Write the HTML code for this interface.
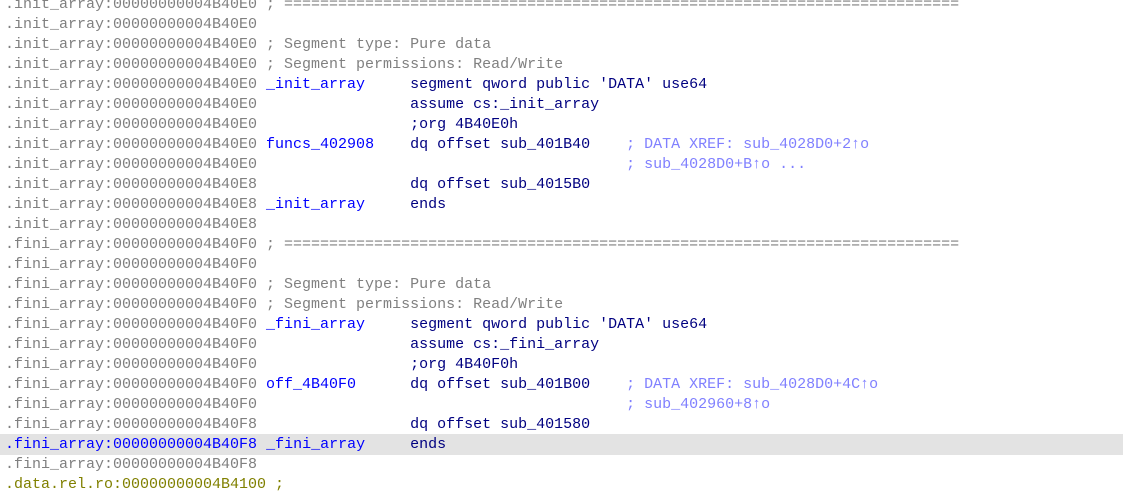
<!DOCTYPE html>
<html><head><style>
body{margin:0;background:#fff;width:1123px;height:483px;overflow:hidden;position:relative}
#c{position:absolute;left:5px;top:-5px;font:15px/20px "Liberation Mono",monospace;color:#808080}
.l{height:20px;white-space:pre}
.h{background:#e3e3e3;margin-left:-5px;padding-left:5px;width:1118px;position:relative;top:-1px;padding-top:1px;margin-bottom:-1px}
.n{color:#0000ff}.i{color:#000080}.c{color:#8080ff}.h .a{color:#0000ff}.o{color:#808000}
</style></head><body><div id="c"><div class="l">.init_array:00000000004B40E0 ; ===========================================================================</div><div class="l">.init_array:00000000004B40E0</div><div class="l">.init_array:00000000004B40E0 ; Segment type: Pure data</div><div class="l">.init_array:00000000004B40E0 ; Segment permissions: Read/Write</div><div class="l">.init_array:00000000004B40E0 <span class="n">_init_array</span>     <span class="i">segment qword public 'DATA' use64</span></div><div class="l">.init_array:00000000004B40E0                 <span class="i">assume cs:_init_array</span></div><div class="l">.init_array:00000000004B40E0                 <span class="i">;org 4B40E0h</span></div><div class="l">.init_array:00000000004B40E0 <span class="n">funcs_402908</span>    <span class="i">dq offset sub_401B40</span>    <span class="c">; DATA XREF: sub_4028D0+2↑o</span></div><div class="l">.init_array:00000000004B40E0                                         <span class="c">; sub_4028D0+B↑o ...</span></div><div class="l">.init_array:00000000004B40E8                 <span class="i">dq offset sub_4015B0</span></div><div class="l">.init_array:00000000004B40E8 <span class="n">_init_array</span>     <span class="i">ends</span></div><div class="l">.init_array:00000000004B40E8</div><div class="l">.fini_array:00000000004B40F0 ; ===========================================================================</div><div class="l">.fini_array:00000000004B40F0</div><div class="l">.fini_array:00000000004B40F0 ; Segment type: Pure data</div><div class="l">.fini_array:00000000004B40F0 ; Segment permissions: Read/Write</div><div class="l">.fini_array:00000000004B40F0 <span class="n">_fini_array</span>     <span class="i">segment qword public 'DATA' use64</span></div><div class="l">.fini_array:00000000004B40F0                 <span class="i">assume cs:_fini_array</span></div><div class="l">.fini_array:00000000004B40F0                 <span class="i">;org 4B40F0h</span></div><div class="l">.fini_array:00000000004B40F0 <span class="n">off_4B40F0</span>      <span class="i">dq offset sub_401B00</span>    <span class="c">; DATA XREF: sub_4028D0+4C↑o</span></div><div class="l">.fini_array:00000000004B40F0                                         <span class="c">; sub_402960+8↑o</span></div><div class="l">.fini_array:00000000004B40F8                 <span class="i">dq offset sub_401580</span></div><div class="l h"><span class="a">.fini_array:00000000004B40F8</span> <span class="n">_fini_array</span>     <span class="i">ends</span></div><div class="l">.fini_array:00000000004B40F8</div><div class="l o">.data.rel.ro:00000000004B4100 ;</div></div></body></html>
